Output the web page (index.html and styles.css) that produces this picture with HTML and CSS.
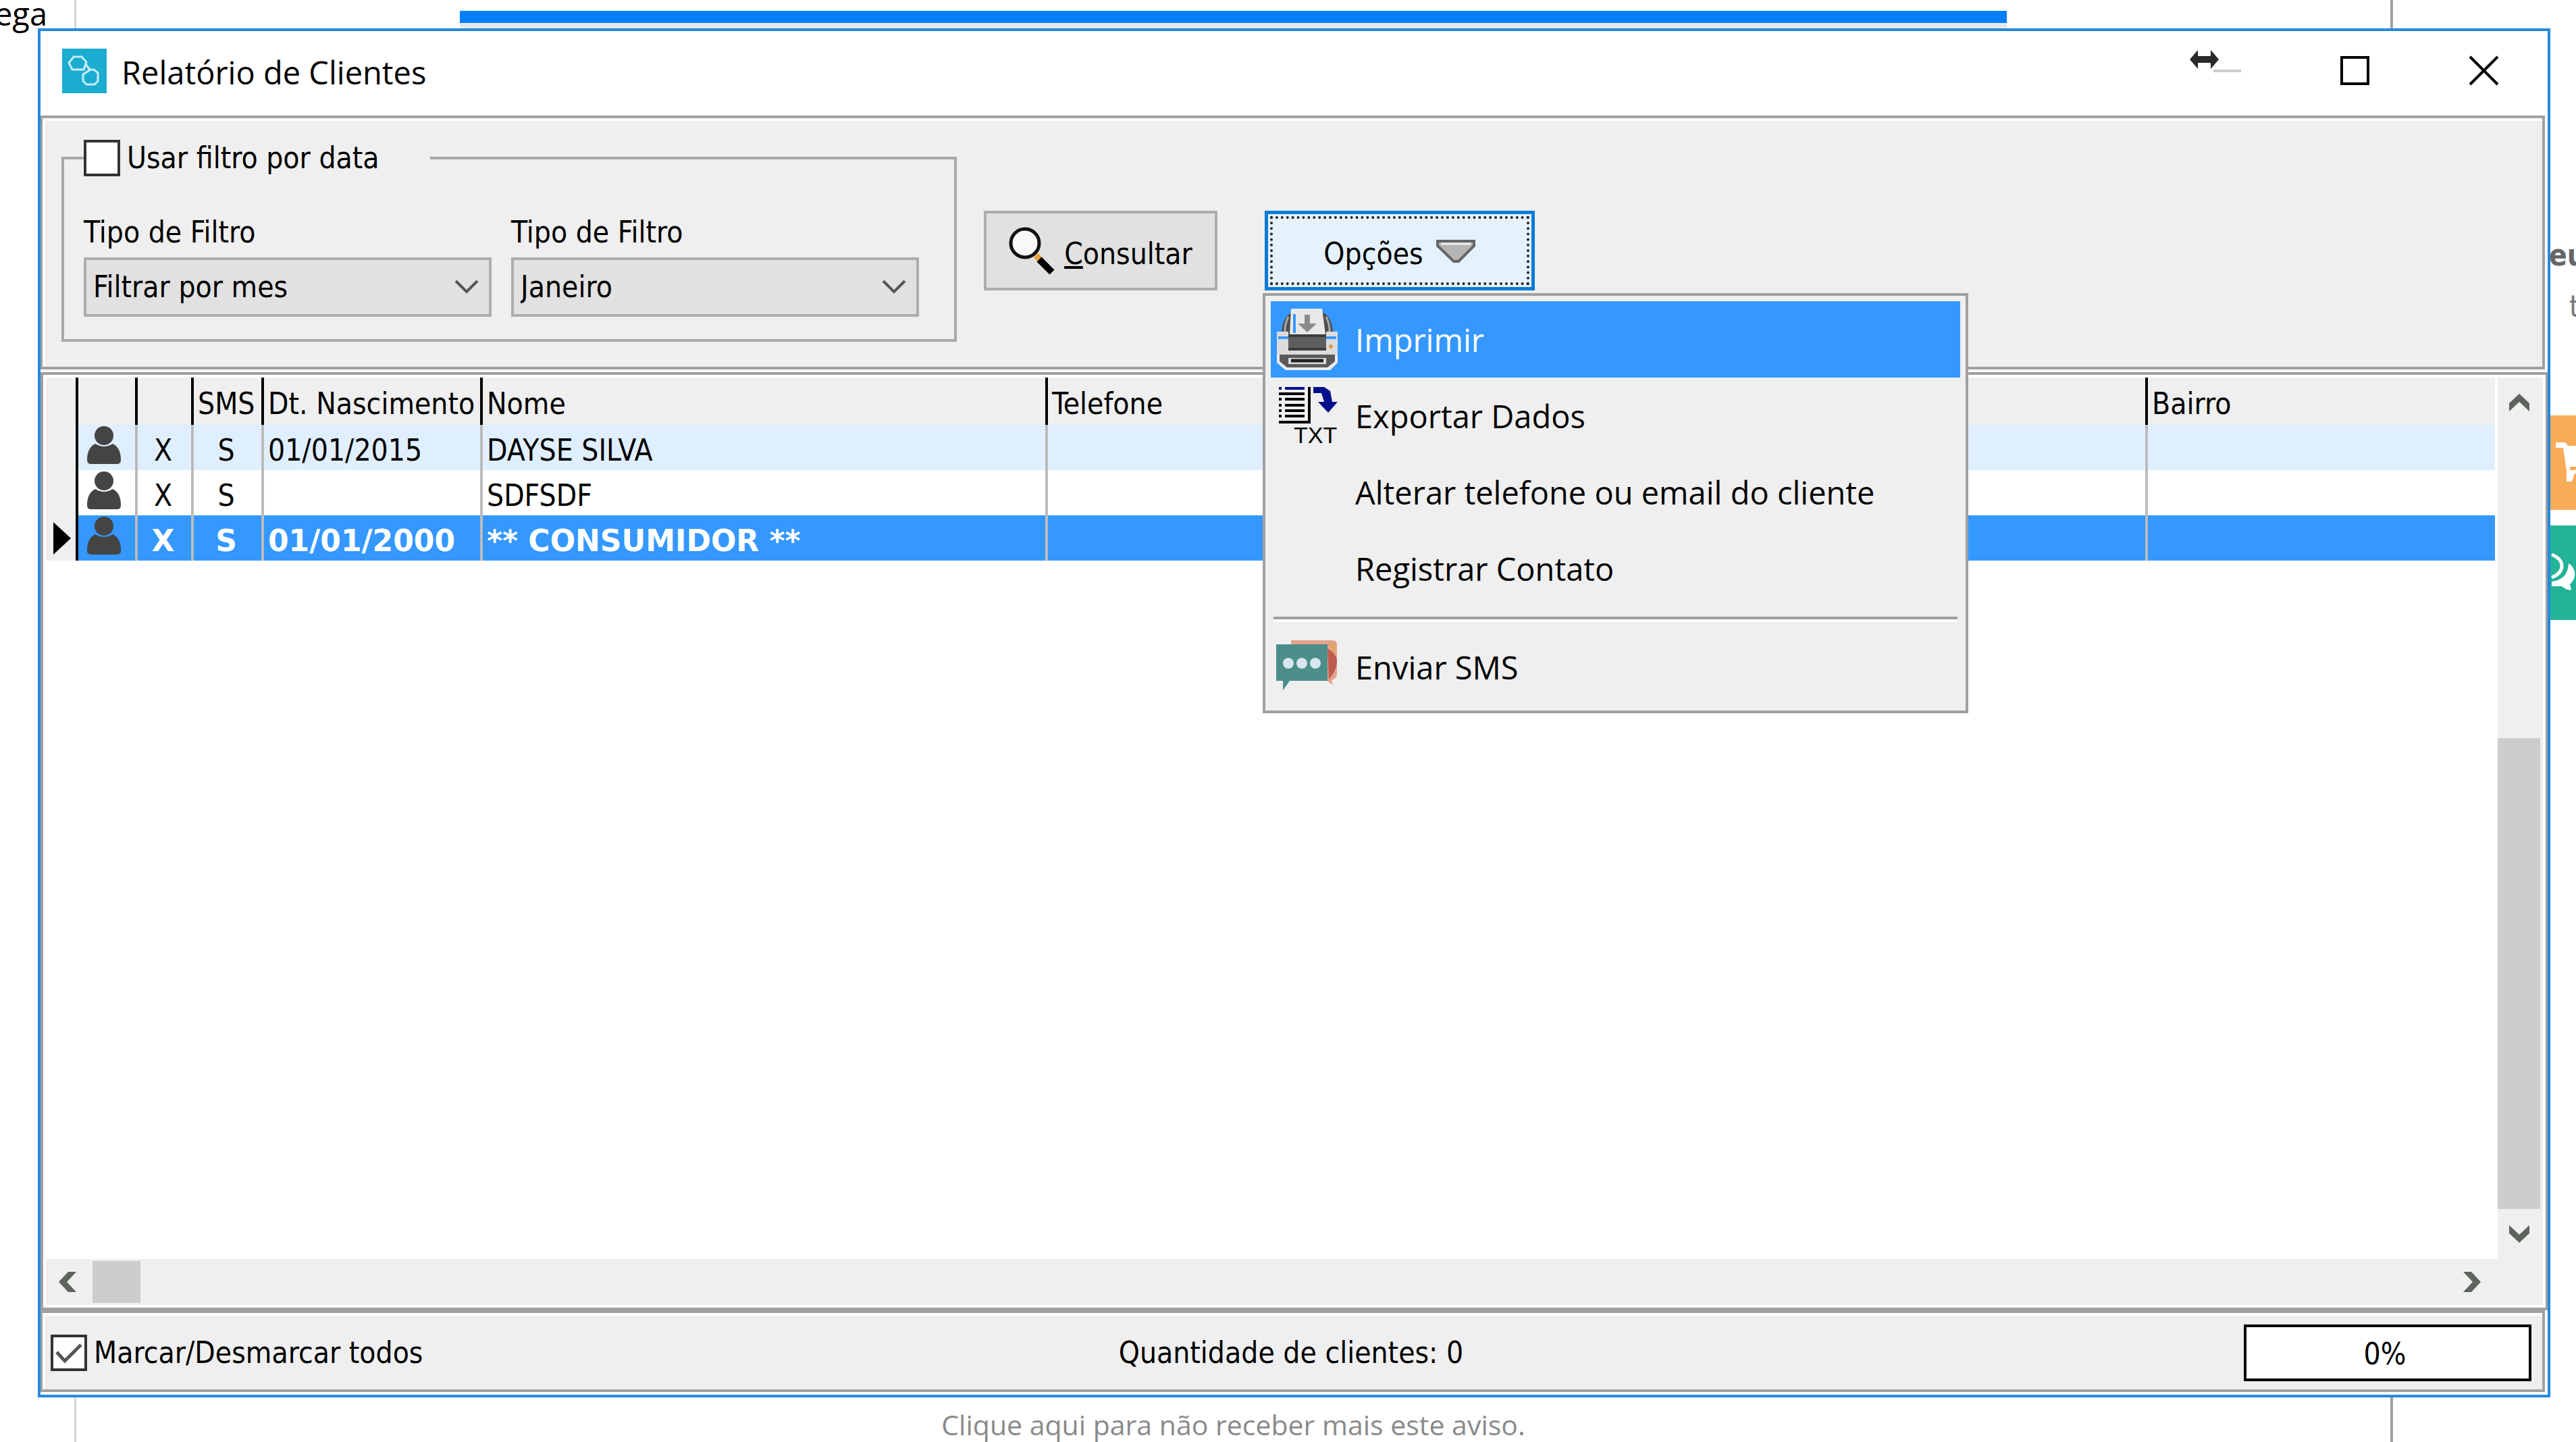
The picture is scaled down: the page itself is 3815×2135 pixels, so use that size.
FILE: index.html
```html
<!DOCTYPE html>
<html lang="pt-BR">
<head>
<meta charset="utf-8">
<title>Relatório de Clientes</title>
<link rel="stylesheet" href="styles.css">
</head>
<body>
<div class="backdrop">
  <div class="backdrop-left"><span>ega</span></div>
  <div class="backdrop-main">
    <div class="banner"></div>
    <a class="notice" href="#aviso">Clique aqui para não receber mais este aviso.</a>
  </div>
  <div class="backdrop-right">
    <strong class="side-title">eu</strong>
    <span class="side-note">t</span>
    <div class="tile tile-cart">
      <svg viewBox="0 0 60 70" aria-hidden="true"><path d="M6 4h14l4 5h46v31H27v5h43v5H34l-4 12H22V46L17 12H6z" fill="#fff"/><path d="M28 42h40" stroke="#f8ac59" stroke-width="3"/></svg>
    </div>
    <div class="tile tile-chat">
      <svg viewBox="0 0 60 70" aria-hidden="true"><path d="M25 20c12 8 12 22 2 31l2 8c-4 2-10-2-14-5H0v-7c18-2 24-12 25-27z" fill="#fff"/><path d="M0 7c20 8 20 26 0 34" fill="none" stroke="#fff" stroke-width="5"/></svg>
    </div>
  </div>
</div>

<main class="window">
  <header class="titlebar">
    <svg class="app-icon" viewBox="0 0 66 66" aria-hidden="true"><rect width="66" height="66" fill="#1caccf"/><g fill="none" stroke="#c5eefa" stroke-width="3"><path d="M17 12h12l7 8-4 11H15L10 21z"/><path d="M36 35l6-4h5l6 5v12l-5 5H36l-5-5V38z"/><path d="M34 22l7 9-3 2"/></g></svg>
    <h1>Relatório de Clientes</h1>
    <div class="window-buttons">
      <button type="button" class="btn-min" aria-label="Minimizar"><svg viewBox="0 0 76 44"><path d="M35 22h41" stroke="#ccc" stroke-width="4"/><path d="M0 -3L12 -17V-8H31V-17L43 -3 31 11V2H12V11z" transform="translate(0 8)" fill="#2a2a2a"/></svg></button>
      <button type="button" class="btn-max" aria-label="Maximizar"><svg viewBox="0 0 44 44"><rect x="2" y="2" width="39" height="39" fill="none" stroke="#000" stroke-width="4"/></svg></button>
      <button type="button" class="btn-close" aria-label="Fechar"><svg viewBox="0 0 44 44"><path d="M1 1l41 41M42 1L1 42" stroke="#000" stroke-width="4"/></svg></button>
    </div>
  </header>

  <section class="filters">
    <fieldset class="group">
      <legend><input type="checkbox" id="usar"><label for="usar">Usar filtro por data</label></legend>
      <div class="field">
        <label for="tipo">Tipo de Filtro</label>
        <div class="combo"><select id="tipo"><option>Filtrar por mes</option></select><svg viewBox="0 0 36 22" aria-hidden="true"><path d="M2 2l16 16L34 2" fill="none" stroke="#555" stroke-width="4"/></svg></div>
      </div>
      <div class="field">
        <label for="mes">Tipo de Filtro</label>
        <div class="combo"><select id="mes"><option>Janeiro</option></select><svg viewBox="0 0 36 22" aria-hidden="true"><path d="M2 2l16 16L34 2" fill="none" stroke="#555" stroke-width="4"/></svg></div>
      </div>
    </fieldset>
    <button type="button" class="push consult"><svg viewBox="0 0 68 70" aria-hidden="true"><path d="M40 42l8 8" stroke="#e8a33a" stroke-width="9"/><path d="M45 48l19 19" stroke="#000" stroke-width="10"/><circle cx="24" cy="24" r="21" fill="#f8f8f8" stroke="#111" stroke-width="5"/></svg><span><u>C</u>onsultar</span></button>
    <div class="dropdown">
      <button type="button" class="push options" aria-expanded="true"><span class="focus"><span>Opções</span><svg viewBox="0 0 60 38" aria-hidden="true"><path d="M3 3H57V10L34 33H27L3 10z" fill="#b5b5b5" stroke="#666" stroke-width="4"/><path d="M8 7H52" stroke="#eee" stroke-width="3"/></svg></span></button>
      <ul class="menu">
        <li class="active"><button type="button">
          <svg viewBox="0 0 92 92" aria-hidden="true"><path d="M22 6Q8 14 8 40H84Q84 14 70 6z" fill="#4d4d4d"/><path d="M18 12Q12 24 13 38M74 12Q80 24 79 38" stroke="#aaa" stroke-width="3" fill="none"/><path d="M22 0H68L73 38H20z" fill="#e8e8e8"/><path d="M27 8V36" stroke="#3498ff" stroke-width="4"/><path d="M42 9h8v13h10L46 35 32 22h10z" fill="#8b8b8b"/><path d="M1 34H18V62H74V34H91V72H1z" fill="#dcdcdc"/><path d="M3 43H18M74 43H89" stroke="#3498ff" stroke-width="4"/><path d="M18 38H74V62H18z" fill="#5e5e5e"/><path d="M18 40H74M18 60H74" stroke="#3d3d3d" stroke-width="4"/><path d="M1 68H91V80L80 91H14L1 80z" fill="#ececec"/><path d="M5 68H87V78L76 87H16L5 78z" fill="#5a5a5a"/><path d="M18 73H74V82H18z" fill="#ddd"/><path d="M22 77H70" stroke="#222" stroke-width="5"/><circle cx="81" cy="56" r="3" fill="#dba04c"/></svg>
          <span>Imprimir</span></button></li>
        <li><button type="button">
          <svg viewBox="0 0 92 92" aria-hidden="true"><path d="M4 5h4M13 5h29" stroke="#000f8b" stroke-width="4"/><path d="M4 13h38M4 21h4M13 21h29M4 30h4M13 30h29M4 38h4M13 38h29M4 46h4M13 46h29M4 55h47M49 3v53" stroke="#000" stroke-width="4" fill="none"/><path d="M55 3h16l9 6 3 16h8L77 41 62 25h9l-4-13H55z" fill="#000f8b"/><text x="26" y="86" class="txt">TXT</text></svg>
          <span>Exportar Dados</span></button></li>
        <li><button type="button"><i></i><span>Alterar telefone ou email do cliente</span></button></li>
        <li><button type="button"><i></i><span>Registrar Contato</span></button></li>
        <li class="separator" role="separator"></li>
        <li><button type="button">
          <svg viewBox="0 0 92 92" aria-hidden="true"><path d="M22 6H84q6 0 6 6V55q0 8-8 10l2 7-12-8H22z" fill="#e5a38e"/><path d="M76 10H88V30z" fill="#dba765"/><path d="M76 18q14 8 14 20T78 64z" fill="#bd5d50"/><path d="M0 12H76V66H20L10 80V66H0z" fill="#4b8e8a"/><g fill="#d9e6ee"><circle cx="18" cy="40" r="8"/><circle cx="38" cy="40" r="8"/><circle cx="58" cy="40" r="8"/></g></svg>
          <span>Enviar SMS</span></button></li>
      </ul>
    </div>
  </section>

  <section class="grid">
    <div class="table-area">
      <table>
        <colgroup><col class="c-mark"><col class="c-user"><col class="c-x"><col class="c-sms"><col class="c-date"><col class="c-name"><col class="c-phone"><col class="c-district"></colgroup>
        <thead><tr><th></th><th></th><th></th><th>SMS</th><th>Dt. Nascimento</th><th>Nome</th><th>Telefone</th><th>Bairro</th></tr></thead>
        <tbody>
          <tr class="odd"><td></td><td><svg class="person" viewBox="0 0 50 56"><ellipse cx="25" cy="14" rx="14" ry="14"/><path d="M12 26q13 8 26 0 12 6 12 24 0 6-6 6H6q-6 0-6-6 0-18 12-24z"/></svg></td><td>X</td><td>S</td><td>01/01/2015</td><td>DAYSE SILVA</td><td></td><td></td></tr>
          <tr><td></td><td><svg class="person" viewBox="0 0 50 56"><ellipse cx="25" cy="14" rx="14" ry="14"/><path d="M12 26q13 8 26 0 12 6 12 24 0 6-6 6H6q-6 0-6-6 0-18 12-24z"/></svg></td><td>X</td><td>S</td><td></td><td>SDFSDF</td><td></td><td></td></tr>
          <tr class="selected"><td><svg class="marker" viewBox="0 0 26 48"><path d="M0 0L26 24 0 48z"/></svg></td><td><svg class="person" viewBox="0 0 50 56"><ellipse cx="25" cy="14" rx="14" ry="14"/><path d="M12 26q13 8 26 0 12 6 12 24 0 6-6 6H6q-6 0-6-6 0-18 12-24z"/></svg></td><td>X</td><td>S</td><td>01/01/2000</td><td>** CONSUMIDOR **</td><td></td><td></td></tr>
        </tbody>
      </table>
    </div>
    <div class="scroll-v">
      <svg viewBox="0 0 30 26" aria-hidden="true"><path d="M0 14L15 0 30 14V26L15 12 0 26z"/></svg>
      <div class="track"><div class="thumb"></div></div>
      <svg viewBox="0 0 30 26" aria-hidden="true"><path d="M0 12L15 26 30 12V0L15 14 0 0z"/></svg>
    </div>
    <div class="scroll-h">
      <svg viewBox="0 0 26 30" aria-hidden="true"><path d="M14 0L0 15 14 30H26L12 15 26 0z"/></svg>
      <div class="track"><div class="thumb"></div></div>
      <svg viewBox="0 0 26 30" aria-hidden="true"><path d="M12 0L26 15 12 30H0L14 15 0 0z"/></svg>
    </div>
  </section>

  <footer class="status">
    <div class="check"><input type="checkbox" id="todos" checked><label for="todos">Marcar/Desmarcar todos</label></div>
    <span>Quantidade de clientes: 0</span>
    <div class="progress">0%</div>
  </footer>
</main>
</body>
</html>
```
FILE: styles.css
```css
* { box-sizing: border-box; }
body {
  margin: 0;
  min-height: 100vh;
  position: relative;
  overflow: hidden;
  background: #fff;
  color: #000;
  font: 44px/54px "DejaVu Sans Condensed", "DejaVu Sans", sans-serif;
}
button, select, input { font: inherit; color: inherit; margin: 0; }
svg { display: block; overflow: visible; flex: none; }

/* application behind the dialog */
.backdrop { display: grid; grid-template-columns: 113px 1fr 275px; min-height: 100vh; }
.backdrop-left { border-right: 3px solid #d4d4d4; }
.backdrop-left span { display: flex; justify-content: flex-end; width: 70px; font: 47px/40px "Open Sans", sans-serif; }
.backdrop-main { display: flex; flex-direction: column; justify-content: space-between; align-items: center; padding-top: 16px; }
.banner { width: calc(67% - 6px); height: 36px; background: #e8e8e8; border-top: 18px solid #0080ff; }
.notice { color: #8a8a8a; text-decoration: none; font: 41px/52px "Open Sans", sans-serif; }
.backdrop-right { border-left: 4px solid #a0a0a0; padding: 350px 0 0 231px; display: flex; flex-direction: column; overflow: hidden; }
.side-title { color: #666; line-height: 56px; }
.side-note { height: 186px; padding: 20px 0 0 30px; color: #777; line-height: 56px; }
.tile { height: 140px; margin-top: 23px; padding: 36px 0 0 4px; }
.tile svg { width: 60px; height: 70px; }
.tile-cart { background: #f8ac59; }
.tile-chat { background: #23b397; }

/* dialog */
.window {
  position: absolute;
  inset: 42px 38px 66px 56px;
  display: flex;
  flex-direction: column;
  border: 4px solid #2589dd;
  background: #fff;
}
.titlebar { display: flex; align-items: center; gap: 22px; height: 125px; padding: 0 72px 8px 32px; }
.app-icon { width: 66px; height: 66px; }
h1 { flex: 1; margin: 0; padding-top: 4px; font: 47px/60px "Open Sans", sans-serif; }
.window-buttons { display: flex; gap: 147px; }
.window-buttons button { border: 0; padding: 0; background: none; }
.window-buttons svg { width: 44px; height: 44px; }
.window-buttons .btn-min svg { width: 76px; }

.filters {
  display: flex;
  align-items: flex-start;
  height: 376px;
  margin-right: 4px;
  padding: 32px 28px 24px;
  border: 4px solid #a0a0a0;
  border-left-width: 3px;
  background: #efefef;
  box-shadow: inset 4px 4px #fff;
}
.group {
  display: flex;
  gap: 29px;
  width: 1326px;
  height: 299px;
  margin: 0;
  padding: 56px 29px 0;
  border: 4px solid #a8a8a8;
  min-width: 0;
}
.group legend { display: flex; align-items: center; gap: 10px; width: 513px; padding: 0; }
.check { display: flex; align-items: center; gap: 10px; }
input[type="checkbox"] { appearance: none; width: 54px; height: 54px; border: 4px solid #333; background: #fff; }
input:checked { background: #fff url("data:image/svg+xml,%3Csvg xmlns='http://www.w3.org/2000/svg' viewBox='0 0 46 46'%3E%3Cpath d='M5 22l12 13L41 11' fill='none' stroke='%23555' stroke-width='5'/%3E%3C/svg%3E"); }
.field { width: 604px; }
.field label { display: block; height: 64px; }
.combo { display: grid; align-items: center; }
.combo > * { grid-area: 1 / 1; }
.combo select { appearance: none; width: 100%; height: 88px; padding: 0 12px 0 10px; border: 4px solid #adadad; border-radius: 0; background: #e1e1e1; }
.combo svg { justify-self: end; width: 36px; height: 22px; margin-right: 19px; }
.push { display: flex; align-items: center; justify-content: center; height: 118px; margin-top: 105px; padding: 0; border: 4px solid #adadad; background: #e1e1e1; }
.consult { width: 346px; margin-left: 40px; gap: 14px; }
.consult svg { width: 68px; height: 70px; }
.consult span { padding-top: 10px; }
.dropdown { position: relative; margin-left: 70px; }
.options { width: 400px; border: 5px solid #0a7bd7; background: #e5f1fb; }
.focus { display: flex; align-items: center; justify-content: center; gap: 18px; flex: 1; height: 102px; margin: 3px; border: 4px dotted #222; }
.focus span { padding-top: 10px; }
.focus svg { width: 60px; height: 38px; margin-top: 4px; }

.menu {
  position: absolute;
  z-index: 2;
  top: 227px;
  left: -3px;
  width: 1045px;
  margin: 0;
  padding: 8px 8px 8px;
  list-style: none;
  border: 4px solid #a0a0a0;
  background: #efefef;
  font: 47px/60px "Open Sans", sans-serif;
}
.menu button { display: flex; align-items: center; gap: 25px; width: 100%; height: 113px; padding: 0 8px; border: 0; background: none; text-align: left; }
.menu svg, .menu i { width: 92px; height: 92px; }
.menu .active { background: #3498ff; color: #fff; }
.separator { height: 8px; margin: 15px 4px 10px; border-top: 4px solid #a0a0a0; border-bottom: 4px solid #fff; }
.txt { font: 34px "Liberation Sans", sans-serif; }

.grid {
  flex: 1;
  display: grid;
  grid-template: 1fr 68px / 1fr 67px;
  margin-top: 4px;
  padding: 4px;
  border: 4px solid #a0a0a4;
  border-width: 4px 3px 4px 4px;
}
.table-area { padding-right: 4px; }
table { width: 100%; border-collapse: collapse; table-layout: fixed; }
.c-mark { width: 46px; }
.c-user { width: 88px; }
.c-x { width: 83px; }
.c-sms { width: 104px; }
.c-date { width: 324px; }
.c-name { width: 837px; }
.c-district { width: 516px; }
th { height: 70px; padding: 8px 0 0 6px; background: #efefef; border-left: 4px solid #000; font-weight: 400; text-align: left; white-space: nowrap; }
td { height: 67px; padding: 8px 0 0 6px; border-left: 4px solid #bbb; white-space: nowrap; line-height: 54px; }
th:first-child, td:first-child { padding: 0; border: 0; background: #efefef; }
td:nth-child(2) { padding: 0 0 8px 13px; border-left: 4px solid #000; }
td:nth-child(3), td:nth-child(4) { padding-left: 0; padding-right: 4px; text-align: center; }
.odd td { background: #e0efff; }
.selected td { background: #3498ff; color: #fff; font-family: "DejaVu Sans", sans-serif; font-weight: 700; }
.odd td:first-child, .selected td:first-child { background: #efefef; }
.person { width: 50px; height: 56px; fill: #444; }
.marker { width: 26px; height: 48px; margin-left: 11px; }

.scroll-v, .scroll-h { display: flex; align-items: center; background: #efefef; fill: #5c645c; }
.scroll-v { flex-direction: column; padding: 24px 4px 24px 0; }
.scroll-v svg { width: 30px; height: 26px; }
.scroll-v .track { flex: 1; display: flex; flex-direction: column; width: 100%; margin: 30px 0 24px; }
.scroll-v .thumb { height: 697px; margin-top: auto; background: #cdcdcd; }
.scroll-h { grid-column: 1 / -1; padding: 0 92px 0 19px; }
.scroll-h svg { width: 26px; height: 30px; }
.scroll-h .track { flex: 1; height: 62px; padding-left: 24px; }
.scroll-h .thumb { width: 71px; height: 62px; background: #cdcdcd; }

.status {
  display: grid;
  grid-template-columns: 1fr auto 1fr;
  align-items: center;
  height: 121px;
  margin: 0 4px 4px 0;
  padding: 4px 16px 0 12px;
  border: 4px solid #a0a0a0;
  border-left-width: 3px;
  background: #efefef;
  box-shadow: inset 4px 4px #fff;
}
.progress { justify-self: end; width: 426px; height: 84px; padding-right: 8px; border: 4px solid #000; background: #fff; text-align: center; line-height: 80px; }
```
